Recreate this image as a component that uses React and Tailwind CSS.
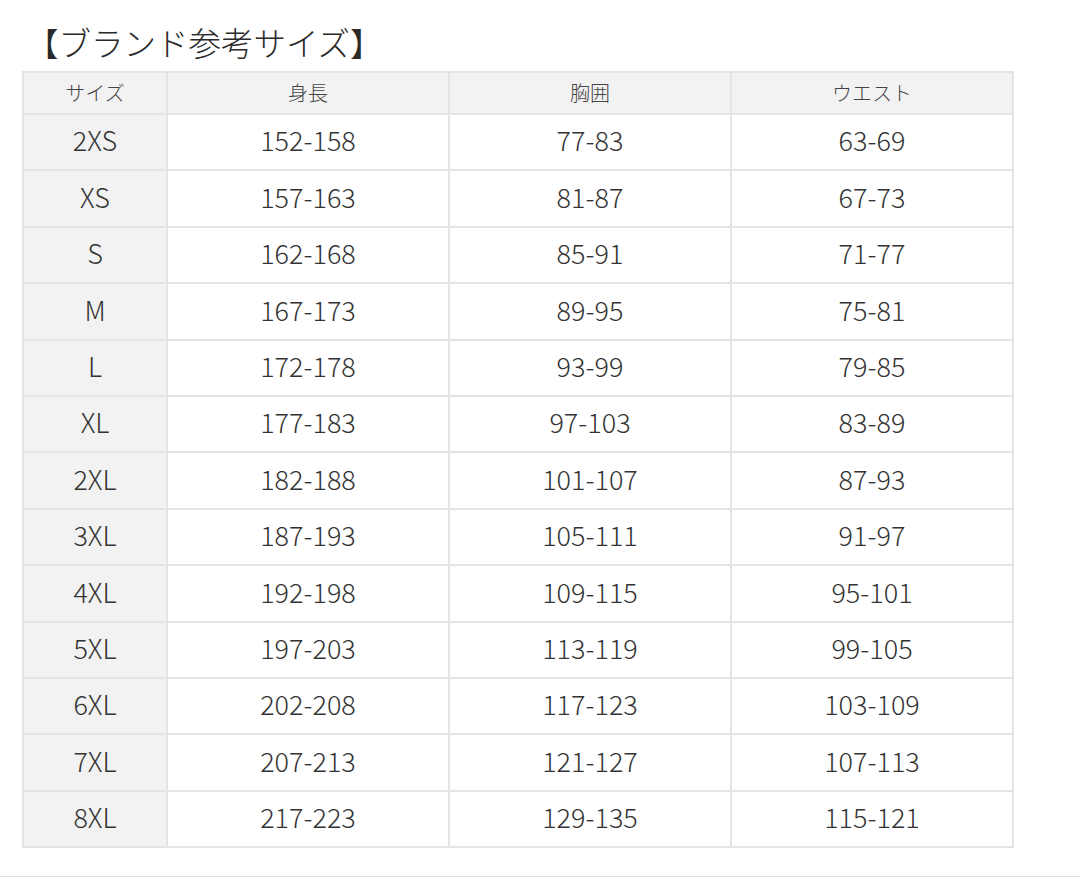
import React from "react";

const rows = [
  ["2XS", "152-158", "77-83", "63-69"],
  ["XS", "157-163", "81-87", "67-73"],
  ["S", "162-168", "85-91", "71-77"],
  ["M", "167-173", "89-95", "75-81"],
  ["L", "172-178", "93-99", "79-85"],
  ["XL", "177-183", "97-103", "83-89"],
  ["2XL", "182-188", "101-107", "87-93"],
  ["3XL", "187-193", "105-111", "91-97"],
  ["4XL", "192-198", "109-115", "95-101"],
  ["5XL", "197-203", "113-119", "99-105"],
  ["6XL", "202-208", "117-123", "103-109"],
  ["7XL", "207-213", "121-127", "107-113"],
  ["8XL", "217-223", "129-135", "115-121"],
];

const headers = ["サイズ", "身長", "胸囲", "ウエスト"];

export default function App() {
  return (
    <div
      className="w-[1080px] h-[877px] bg-white flex flex-col text-[#333]"
      style={{ fontFamily: '"Noto Sans CJK JP", "Noto Sans", sans-serif' }}
    >
      <div className="mt-[24px] mb-[11px] h-[36px] pl-[26px] flex items-center text-[32.5px] font-light leading-none text-[#2a2a2a]">
        【ブランド参考サイズ】
      </div>
      <div className="ml-[22px] w-[992px] grid grid-cols-[142px_280px_280px_280px] gap-[2px] p-[2px] bg-[#e4e4e4]">
        {headers.map((h) => (
          <div
            key={h}
            className="h-[40px] bg-[#f2f2f2] flex items-center justify-center text-[20px] font-light text-[#444]"
          >
            {h}
          </div>
        ))}
        {rows.map((r) =>
          r.map((c, i) => (
            <div
              key={r[0] + i}
              className={
                "h-[54.4px] pb-[3px] flex items-center justify-center text-[27px] font-light " +
                (i === 0 ? "bg-[#f2f2f2]" : "bg-white")
              }
            >
              {c}
            </div>
          ))
        )}
      </div>
      <div className="flex-1" />
      <div className="h-[1px] bg-[#e2e2e2]" />
    </div>
  );
}
